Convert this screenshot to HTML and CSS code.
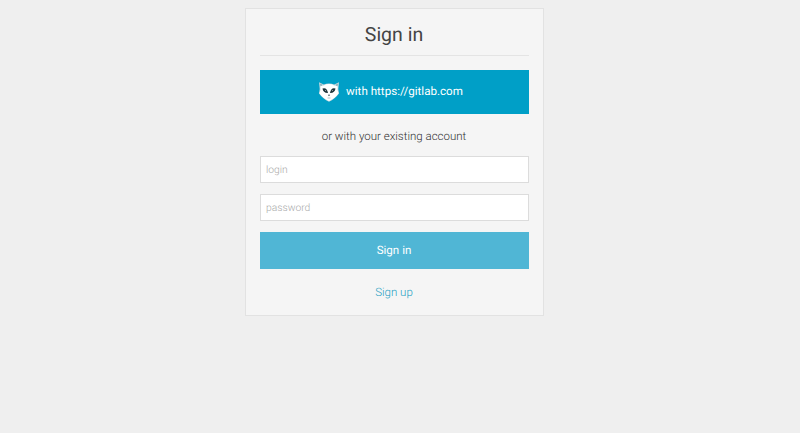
FILE: index.html
```
<!DOCTYPE html>
<html lang="en">
<head>
<meta charset="utf-8">
<title>Sign in</title>
<link rel="stylesheet" href="styles.css">
</head>
<body>
<main class="card">
  <h1 class="title">Sign in</h1>
  <button class="button provider" type="button">
    <svg class="logo" viewBox="0 0 20 20" aria-hidden="true">
      <path fill="#c5d9df" d="M0 .3 4.7 2.6Q10 .2 15.3 2.6L20 .3 19.3 7 20 11.5Q16 17 10 19.7 4 17 0 11.5L.7 7Z"/>
      <path fill="#fff" d="M1.4 4 4.8 3.5Q10 .6 15.2 3.5L18.6 4 18.5 8 19.6 11.2Q16 16.4 10 19 4 16.4.4 11.2L1.5 8Z"/>
      <path fill="#8eafb9" d="M.9 1.4 3.6 2.8 1.7 4.4ZM19.1 1.4 16.4 2.8 18.3 4.4Z"/>
      <path fill="#20343b" d="M3.5 6.6Q8 5.2 9 11 4.2 11.2 3.5 6.6ZM16.5 6.6Q12 5.2 11 11 15.8 11.2 16.5 6.6ZM8.9 12.7H11.1L10 14.2Z"/>
      <path fill="#fff" d="M6 8 7.2 8.3 6.7 9ZM14 8 12.8 8.3 13.3 9Z"/>
      <path fill="none" stroke="#8da3ab" stroke-width=".6" d="M8.5 16H11.5"/>
    </svg>
    <span>with https://gitlab.com</span>
  </button>
  <p class="hint">or with your existing account</p>
  <form class="form">
    <input class="field" type="text" placeholder="login" aria-label="login">
    <input class="field" type="password" placeholder="password" aria-label="password">
    <button class="button submit" type="button">Sign in</button>
  </form>
  <a class="signup" href="#">Sign up</a>
</main>
</body>
</html>
```
FILE: styles.css
```
* { box-sizing: border-box; }
body {
  margin: 0;
  padding-top: 8px;
  background: #efefef;
  font-family: Roboto, sans-serif;
  font-weight: 300;
  text-rendering: geometricPrecision;
}
.card {
  width: 299px;
  height: 308px;
  margin-left: 245px;
  padding: 0 14px;
  border: 1px solid #e2e2e2;
  background: #f5f5f5;
  text-align: center;
}
.title {
  height: 47px;
  margin: 0 0 14px;
  padding-right: 1px;
  border-bottom: 1px solid #e4e4e4;
  color: #444;
  font-size: 19.5px;
  font-weight: 400;
  line-height: 52px;
}
.button {
  display: flex;
  align-items: center;
  justify-content: center;
  width: 100%;
  padding: 0;
  border: 0;
  color: #fff;
  font: 400 11.6px Roboto, sans-serif;
  text-rendering: inherit;
}
.provider {
  height: 44px;
  gap: 7px;
  padding: 0 7px 2px 0;
  background: #009fc7;
}
.logo { width: 20px; height: 20px; margin-top: 2px; }
.hint {
  margin: 0;
  height: 42px;
  padding-right: 1px;
  color: #333;
  font-size: 11.5px;
  line-height: 45px;
}
.form { display: flex; flex-direction: column; }
.field {
  width: 100%;
  height: 27px;
  margin: 0 0 11px;
  padding: 0 5px;
  border: 1px solid #dcdcdc;
  border-radius: 0;
  background: #fff;
  font: 300 10.3px Roboto, sans-serif;
  text-rendering: inherit;
}
.field::placeholder { color: #aaa; }
.submit {
  height: 37px;
  padding: 0 1px 1px 0;
  background: #50b6d5;
}
.signup {
  display: block;
  padding-right: 1px;
  color: #269fc3;
  font-size: 11.5px;
  line-height: 46px;
  text-decoration: none;
}
```
